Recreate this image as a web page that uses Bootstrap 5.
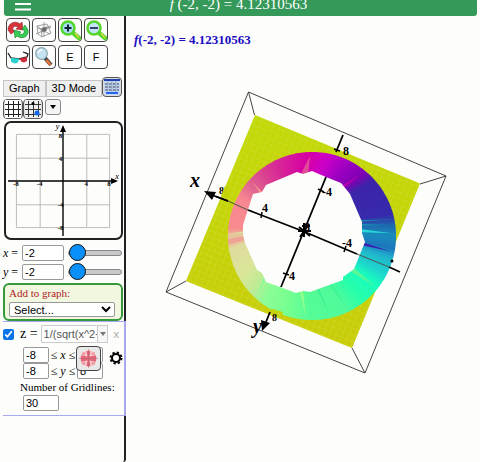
<!DOCTYPE html>
<html lang="en">
<head>
<meta charset="utf-8">
<meta name="viewport" content="width=device-width, initial-scale=1">
<title>3D Surface Grapher</title>
<link href="https://cdn.jsdelivr.net/npm/bootstrap@5.3.0/dist/css/bootstrap.min.css" rel="stylesheet">
<style>
  body { font: 11px/16px "Liberation Sans", Arial, sans-serif; background: #fdfdfc; color: #000; }
  .serif { font-family: "Liberation Serif", "Times New Roman", serif; }
  .topbar { background: #35995a; height: 16px; margin: 0 3px 0 4px; border-radius: 0 0 3px 3px; overflow: hidden; color: #fff; }
  .topbar h1 { font-size: 15px; line-height: 20px; margin: 0; padding: 0 4px 2px 0; }
  .menu-btn { width: 16px; height: 16px; left: 11px; top: 0; }
  .panel { width: 126px; flex: none; border-right: 2px solid #222; border-bottom-right-radius: 3px; }
  .shell { min-height: calc(100vh - 16px); }
  .plain { border: 0; padding: 0; background: none; color: inherit; display: flex; align-items: center; justify-content: center; }
  .tool { width: 24px; height: 24px; border: 1px solid #444; border-radius: 4px; background: #fdfdfd; }
  .tools { display: grid; grid-template-columns: repeat(4, 24px); gap: 3px 2px; padding: 2px 6px 0; }
  .modes { padding: 8px 2px 0 3px; }
  .mode { border: 1px solid #c4c4c4; background: #efefef; height: 17px; line-height: 15px; padding: 0 5px; white-space: nowrap; }
  .toggle { width: 20px; height: 20px; border: 1px solid #555; border-radius: 4px; background: #ddd; }
  .grids { padding: 2px 0 0 3px; }
  .small-toggle { width: 16px; height: 16px; border: 1px solid #888; border-radius: 3px; background: #f4f4f4; margin-left: 2px; }
  .mini { border: 2px solid #222; border-radius: 7px; margin: 2px 1px 0 4px; }
  .vars { padding: 3px 0 2px; }
  .var-row { padding-left: 3px; height: 19px; }
  .var-row label { width: 19px; font-size: 12px; }
  .box { border: 1px solid #999; border-radius: 2px; background: #fff; padding: 0 2px; font-size: 11px; line-height: 14px; height: 16px; color: #000; min-width: 0; }
  .w-var { width: 42px; }
  .w-num { width: 26px; }
  .w-grid { width: 36px; }
  .slide { appearance: none; width: 54px; height: 17px; background: none; margin: 0 0 0 4px; }
  .slide::-webkit-slider-runnable-track { height: 6px; background: #c9c9c9; border: 1px solid #888; border-radius: 3px; }
  .slide::-webkit-slider-thumb { appearance: none; width: 17px; height: 17px; margin-top: -7px; border: 1px solid #111; border-radius: 50%; background: #0a90f8; }
  .adder { border: 2px solid #36993a; border-radius: 6px; background: #f2f7df; margin: 0 1px 0 3px; padding: 0 6px 2px 4px; }
  .adder label { color: #b01828; line-height: 17px; display: block; }
  .adder select { width: 100%; height: 15px; line-height: 13px; border: 1px solid #999; border-radius: 2px; background: #fff; font-size: 11px; padding: 0; display: block; }
  .item { border: 1px solid #a8a8ee; border-width: 1px 2px 1px 0; margin: 0 -2px 0 3px; padding: 3px 0 4px; }
  .tick { width: 11px; height: 11px; margin: 0; accent-color: #0a74e8; }
  .fn-label { width: 27px; font-size: 14px; padding-left: 6px; }
  .fn { width: 58px; height: 18px; border: 1px solid #ccc; border-right: 0; color: #555; padding-right: 0; }
  .fn-drop { width: 11px; height: 18px; border: 1px solid #ccc; background: #f6f6f6; }
  .fn-close { color: #aaa; width: 16px; }
  .ranges { padding: 0 0 0 20px; }
  .rel { font-size: 12px; width: 28px; text-align: center; white-space: nowrap; }
  .swatch { left: 73px; top: 3px; width: 25px; height: 25px; border: 1px solid #444; border-radius: 4px; background: #e8e8e8; }
  .gear { right: 1px; top: 8px; }
  .lines-label { padding-left: 17px; }
  .lines-box { padding-left: 20px; }
  .value { color: #1a0cc0; font-size: 13px; line-height: 16px; font-weight: 700; padding: 16px 0 0 8px; }
</style>
<script src="https://cdn.jsdelivr.net/npm/bootstrap@5.3.0/dist/js/bootstrap.bundle.min.js"></script>
</head>
<body>
<header class="topbar position-relative d-flex justify-content-center align-items-end">
  <button class="plain menu-btn position-absolute" aria-label="Menu">
    <svg width="16" height="16"><path d="M0 4h16M0 9.500h16" stroke="#fff" stroke-width="2"/></svg>
  </button>
  <h1 class="serif fw-normal text-nowrap"><i>f</i> (-2, -2) = 4.12310563</h1>
</header>
<div class="shell d-flex">
  <aside class="panel">
    <div class="tools">
      <button class="plain tool" aria-label="Reset rotation"><svg width="22" height="22" viewBox="0 0 22 22"><path d="M1 11C1 4 8 1 13 5l2-2 1 8-7-1 2-2C8 6 5 8 6 11l2 1-4 3z" fill="#d8343c" stroke="#8a2020" stroke-width=".6"/><path d="M21 11c1 7-6 10-11 6l-2 2-1-8 7 2-2 2c4 1 6-1 5-4l-2-1 3-4z" fill="#36cf55" stroke="#18742c" stroke-width=".6"/></svg></button>
      <button class="plain tool" aria-label="Show box"><svg width="20" height="20" viewBox="0 0 20 20" fill="none" stroke="#888" stroke-width=".8"><path d="M3 6l10-2 4 9-9 4-4-3zM3 6l4 3 10-3M7 9l1 8M10 2v14M2 14l15-7M4 8l12 6"/><path d="M8 8l5-1-1 4-4 1z" fill="#666"/></svg></button>
      <button class="plain tool" aria-label="Zoom in"><svg width="22" height="22" viewBox="0 0 22 22"><path d="M13 13l7 6" stroke="#55d52b" stroke-width="4.500" stroke-linecap="round"/><path d="M16 14l4 5" stroke="#d8dc40" stroke-width="1.500"/><circle cx="9" cy="9" r="6.500" fill="#a8dcf4" stroke="#55d52b" stroke-width="2.500"/><path d="M5.500 9h7M9 5.500v7" stroke="#123" stroke-width="2"/></svg></button>
      <button class="plain tool" aria-label="Zoom out"><svg width="22" height="22" viewBox="0 0 22 22"><path d="M13 13l7 6" stroke="#55d52b" stroke-width="4.500" stroke-linecap="round"/><path d="M16 14l4 5" stroke="#d8dc40" stroke-width="1.500"/><circle cx="9" cy="9" r="6.500" fill="#c4e4f8" stroke="#55d52b" stroke-width="2.500"/><path d="M5 9h8" stroke="#346" stroke-width="2"/></svg></button>
      <button class="plain tool" aria-label="3D glasses"><svg width="22" height="22" viewBox="0 0 22 22"><path d="M1 7l3 5 8 1 8-2 1-3-5-2" fill="none" stroke="#222" stroke-width="1.300"/><path d="M4 12l8 .5-1 4-3 1-4-1.500z" fill="#29d3cf"/><path d="M13 12.500l7-1.500v4l-3 1.500-3-1z" fill="#cf2b3c"/></svg></button>
      <button class="plain tool" aria-label="Trace"><svg width="22" height="22" viewBox="0 0 22 22"><path d="M12 12l6 7" stroke="#444" stroke-width="4"/><path d="M13.500 14l4 5" stroke="#e8763a" stroke-width="2.500"/><circle cx="8.500" cy="7.500" r="5.800" fill="#c4e2f0" stroke="#8aa4b0" stroke-width="1.200"/><path d="M5 7q1-3 4-3" stroke="#fff" stroke-width="1.500" fill="none"/></svg></button>
      <button class="plain tool">E</button>
      <button class="plain tool">F</button>
    </div>
    <div class="modes d-flex align-items-end justify-content-between">
      <button class="plain mode">Graph</button>
      <button class="plain mode">3D Mode</button>
      <button class="plain toggle" aria-label="Table"><svg width="18" height="18" viewBox="0 0 18 18"><path d="M1 1h16v16H1z" fill="#c8d8f4"/><path d="M1 2h16" stroke="#24a" stroke-width="2"/><path d="M2 6h14M2 9h14M2 12h14" stroke="#345" stroke-dasharray="3 1"/><path d="M3 15h12" stroke="#26e" stroke-width="2"/><path d="M5 3v11M9 3v11M13 3v11" stroke="#9ab"/></svg></button>
    </div>
    <div class="grids d-flex">
      <button class="plain toggle" aria-label="Grid"><svg width="18" height="18" viewBox="0 0 18 18"><path d="M1 0h16v18H1z" fill="#fff"/><path d="M1 4.500h16M1 9.500h16M1 14.500h16M4.500 1v16M9.500 1v16M14.500 1v16" stroke="#222"/></svg></button>
      <button class="plain toggle" aria-label="Trace grid"><svg width="18" height="18" viewBox="0 0 18 18"><path d="M1 0h16v18H1z" fill="#eee"/><path d="M1 4.500h16M1 9.500h16M1 14.500h16M4.500 1v16M9.500 1v16M14.500 1v16" stroke="#333"/><circle cx="9" cy="3.500" r="1.500"/><circle cx="13" cy="13" r="2.500" fill="#16e"/></svg></button>
      <button class="plain small-toggle" aria-label="More"><svg width="8" height="6"><path d="M1 1h6L4 5z"/></svg></button>
    </div>
    <div class="mini">
      <svg class="d-block w-100" viewBox="6 122 116 116" role="img" aria-label="Coordinate plane">
        <path d="M16.500 133.500h94v94h-94zM40.500 133v94M87.500 133v94M16 157.500h94M16 204.500h94" fill="none" stroke="#bbb"/>
        <path d="M8 180.500h106M63.500 236v-108" stroke="#000" stroke-width="1.400"/>
        <path d="M119 180.500l-7-3v6zM63.500 124l-3 7h6z"/>
        <g class="serif" font-size="7" font-weight="700" text-anchor="middle"><text x="16" y="186">-8</text><text x="40" y="186">-4</text><text x="87" y="186">4</text><text x="110" y="186">8</text><text x="61" y="137">8</text><text x="61" y="160">4</text><text x="61" y="207">-4</text><text x="61" y="230">-8</text></g>
        <g class="serif" font-size="9" font-style="italic"><text x="56" y="128">y</text><text x="116" y="178">x</text></g>
      </svg>
    </div>
    <div class="vars">
      <div class="var-row d-flex align-items-center"><label for="vx" class="serif text-nowrap"><i>x</i> =</label><input id="vx" class="box w-var" value="-2"><input class="slide" type="range" min="-2" max="8" value="-2" aria-label="x value"></div>
      <div class="var-row d-flex align-items-center"><label for="vy" class="serif text-nowrap"><i>y</i> =</label><input id="vy" class="box w-var" value="-2"><input class="slide" type="range" min="-2" max="8" value="-2" aria-label="y value"></div>
    </div>
    <div class="adder"><label for="add" class="serif">Add to graph:</label><select id="add"><option>Select...</option></select></div>
    <div class="item">
      <div class="d-flex align-items-center">
        <input id="on" class="tick" type="checkbox" checked><label for="on" class="fn-label serif text-nowrap">z =</label><input class="box fn" value="1/(sqrt(x^2+y^2))" aria-label="Function"><button class="plain fn-drop" aria-label="Examples"><svg width="6" height="4"><path d="M0 0h6L3 4z" fill="#777"/></svg></button><button class="plain fn-close ms-auto">x</button>
      </div>
      <div class="position-relative pt-1">
        <div class="ranges"><div class="d-flex"><input class="box w-num" value="-8" aria-label="x minimum"><span class="rel serif">≤ <i>x</i> ≤</span><input class="box w-num" value="8" aria-label="x maximum"></div>
        <div class="d-flex"><input class="box w-num" value="-8" aria-label="y minimum"><span class="rel serif">≤ <i>y</i> ≤</span><input class="box w-num" value="8" aria-label="y maximum"></div></div>
        <button class="plain swatch position-absolute" aria-label="Colors"><svg width="21" height="21" viewBox="-10 -10 20 20"><circle r="8" fill="#f6d4d6"/><path d="M-2-7q2-1 4 0l-1 5 6-1q1 3 0 6l-6-1 1 5q-2 1-4 0l1-5-6 1q-1-3 0-6l6 1z" fill="#e4667a"/><g fill="#f09ca4"><circle cx="-4.500" cy="-4.500" r="1.800"/><circle cx="4.500" cy="-4.500" r="1.800"/><circle cx="4.500" cy="4.500" r="1.800"/><circle cx="-4.500" cy="4.500" r="1.800"/></g><path d="M0-9v18M-9 0h18" stroke="#a66" stroke-width=".5"/></svg></button>
        <button class="plain gear position-absolute" aria-label="Settings"><svg width="14" height="14" viewBox="-7 -7 14 14"><circle r="4" fill="none" stroke="#000" stroke-width="2"/><circle r="5.500" fill="none" stroke="#000" stroke-width="2" stroke-dasharray="2.300 2.020"/></svg></button>
      </div>
      <label for="gl" class="lines-label serif text-nowrap d-block">Number of Gridlines:</label>
      <div class="lines-box"><input id="gl" class="box w-grid d-block" value="30"></div>
    </div>
  </aside>
  <main class="flex-grow-1">
    <div class="value serif"><i>f</i>(-2, -2) = 4.12310563</div>
    <svg class="d-block w-100" viewBox="126 48 354 340" role="img" aria-label="Surface plot">
      <defs><pattern id="mesh" width="6" height="6" patternUnits="userSpaceOnUse" patternTransform="rotate(22.500)"><path d="M0 0h6M0 0v6" stroke="#d0e03c" stroke-width=".7"/></pattern>
      <linearGradient id="base" x2="0" y2="1"><stop stop-color="#c2da08"/><stop offset="1" stop-color="#c8cc08"/></linearGradient></defs>
      <path d="M255 115L420 183.500 352 348 186 281z" fill="url(#base)"/>
      <path d="M255 115L420 183.500 352 348 186 281z" fill="url(#mesh)"/>
      <g id="ring"></g>
      <path d="M243 235L243 225 253 194 262 192 266 185 297 172 303 174 312 171 326 177 341 183 350 194 362 222 362 233 365 242 354 269 343 277 343 280 310 292 303 291 296 293 280 287 266 282 262 273 257 270 245 243z" fill="#fdfdfc"/>
      <path d="M248.500 92L446 176 365 373 166 292zM248.500 92l6 23M446 176l-26 8M365 373l-13-25M166 292l20-11" fill="none" stroke="#444"/>
      <path d="M212 195L228 201M248 210L305 232 357 254M389 267l11 5M343 135l-7 17M326 177L281 287M270 312l-4 10" fill="none" stroke="#000" stroke-width="1.800"/>
      <path d="M228 201L248 210M357 254L389 267" stroke="#4a5548"/>
      <path d="M204 191l12 1-4 8zM262 331l-1-11 9 3z"/>
      <circle cx="392" cy="261" r="1.500"/>
      <path d="M262 212l-1 6M346 246l-2 6M318 189l6 3M283 273l6 2M334 149l6 2" stroke="#000" stroke-width="1.500"/>
      <path d="M299 227l11 9M300 237l9-13M298 231h13M304 223v14M302 226h8" stroke="#000" stroke-width="2"/>
      <g class="serif" font-size="12" font-weight="700"><text x="262" y="212">4</text><text x="342" y="247">-4</text><text x="322" y="196">-4</text><text x="289" y="280">4</text><text x="343" y="155">8</text><text x="304" y="231">8</text></g>
      <g class="serif" font-size="10" font-weight="700"><text x="219" y="194">8</text><text x="272" y="321">8</text></g>
      <path d="M221 196l4-10 6 0-4 12zM270 311l12 4 1-3-11-3z" fill="#c4d408"/>
      <path d="M216 196.500L228 201" stroke="#000" stroke-width="1.500"/>
      <g class="serif" font-size="20" font-style="italic" font-weight="700"><text x="190" y="187">x</text><text x="253" y="333">y</text></g>
    </svg>
  </main>
</div>
<script>
  // Hue of the surface by direction, degrees clockwise from the right.
  const stops = [[0,26,140,190],[9,28,120,190],[16,32,180,205],[28,30,215,205],[36,24,252,190],[52,40,255,170],[65,80,250,155],[90,85,252,150],[108,120,255,145],[126,140,252,150],[136,190,235,150],[150,218,230,152],[172,224,218,160],[176,244,145,145],[180,224,215,160],[184,248,140,142],[208,248,135,145],[220,222,100,145],[235,218,60,145],[250,215,30,155],[268,214,0,165],[282,204,0,200],[296,160,0,195],[310,128,0,180],[318,60,36,170],[345,55,42,172],[353,28,105,175],[360,26,140,190]];
  const inner = [304, 232, 52], outer = [312, 236, 84];
  const at = (c, deg, r) => { const a = deg * Math.PI / 180; return (c[0] + r * Math.cos(a)).toFixed(1) + ' ' + (c[1] + r * Math.sin(a)).toFixed(1); };
  function colour(d) {
    d = (d + 360) % 360;
    const i = stops.findIndex((s, n) => n && d <= s[0]);
    const a = stops[i - 1], b = stops[i], t = (d - a[0]) / (b[0] - a[0]);
    return 'rgb(' + [1, 2, 3].map(k => Math.round(a[k] + (b[k] - a[k]) * t)).join() + ')';
  }
  let shapes = '';
  const wedge = (a, b, r, fill) => `<path d="M${at(inner, a, 48)}L${at(outer, a, r)}A${r} ${r} 0 0 1 ${at(outer, b, r)}L${at(inner, b, 48)}z" fill="${fill}"/>`;
  for (let d = 0; d < 360; d += 2) shapes += wedge(d, d + 2.6, 84, colour(d + 1));
  const streaks = [[263,274,'#e04c98'],[306,311,'#b000b0'],[220,224,'#f8948c'],[199,203,'#f47c8c'],[356,360,'#28d8d8'],[9,13,'#3c20b0'],[347,349,'#1c86b0'],[351,353,'#1c96b4'],[35,42,'#58f898'],[62,66,'#3cf498'],[92,97,'#90ff88'],[131,135,'#88fa98'],[244,247,'#cc2c90'],[180,183,'#dce49c'],[76,79,'#38f098']];
  for (const [a, b, fill] of streaks) shapes += `<path d="M${at(inner, a, 52)}L${at(inner, b, 52)}L${at(outer, (a + b) / 2, 80)}z" fill="${fill}"/>`;
  document.getElementById('ring').innerHTML = shapes;
</script>
</body>
</html>
